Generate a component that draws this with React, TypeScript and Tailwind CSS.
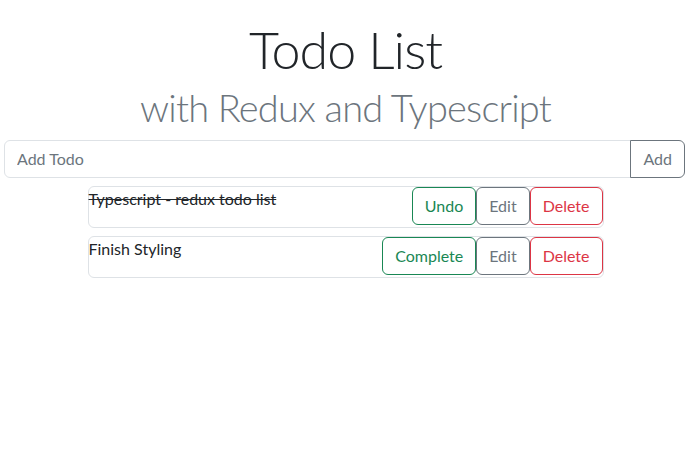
import React from "react";

const font = { fontFamily: 'Lato, "Open Sans", sans-serif' };

function Btn({ label, tone }: { label: string; tone: "green" | "gray" | "red" }) {
  const cls =
    tone === "green"
      ? "border-[#198754] text-[#198754]"
      : tone === "gray"
      ? "border-[#6c757d] text-[#6c757d]"
      : "border-[#dc3545] text-[#dc3545]";
  return (
    <button
      className={`h-[38px] px-[12px] border rounded-[6px] bg-white text-[16px] leading-[24px] ${cls}`}
    >
      {label}
    </button>
  );
}

function Item({ text, done }: { text: string; done: boolean }) {
  return (
    <div className="flex justify-between items-start border border-[#dee2e6] rounded-[6px] pb-[2px]">
      <span className={`text-[16px] leading-[24px] text-[#212529] ${done ? "line-through" : ""}`}>{text}</span>
      <div className="flex">
        <Btn label={done ? "Undo" : "Complete"} tone="green" />
        <Btn label="Edit" tone="gray" />
        <Btn label="Delete" tone="red" />
      </div>
    </div>
  );
}

export default function App() {
  return (
    <div className="w-[691px] h-[452px] bg-white" style={font}>
      <div className="flex flex-col items-center pt-[18px]">
        <h1 className="text-[52px] leading-[1.2] tracking-[-1px] font-light text-[#212529]">Todo List</h1>
        <h2 className="text-[38px] leading-[1.2] tracking-[-0.8px] font-light text-[#6c757d] mt-[5px]">with Redux and Typescript</h2>
      </div>
      <div className="flex px-[4px] pr-[6px] mt-[9px]">
        <input
          placeholder="Add Todo"
          className="flex-1 h-[38px] px-[12px] border border-[#dee2e6] rounded-l-[6px] text-[16px] placeholder-[#6c757d] outline-none"
        />
        <button className="h-[38px] px-[12px] border border-[#6c757d] rounded-r-[6px] text-[16px] text-[#6c757d] -ml-[1px]">
          Add
        </button>
      </div>
      <div className="w-[516px] mx-auto mt-[8px] flex flex-col gap-[8px]">
        <Item text="Typescript - redux todo list" done />
        <Item text="Finish Styling" done={false} />
      </div>
    </div>
  );
}
